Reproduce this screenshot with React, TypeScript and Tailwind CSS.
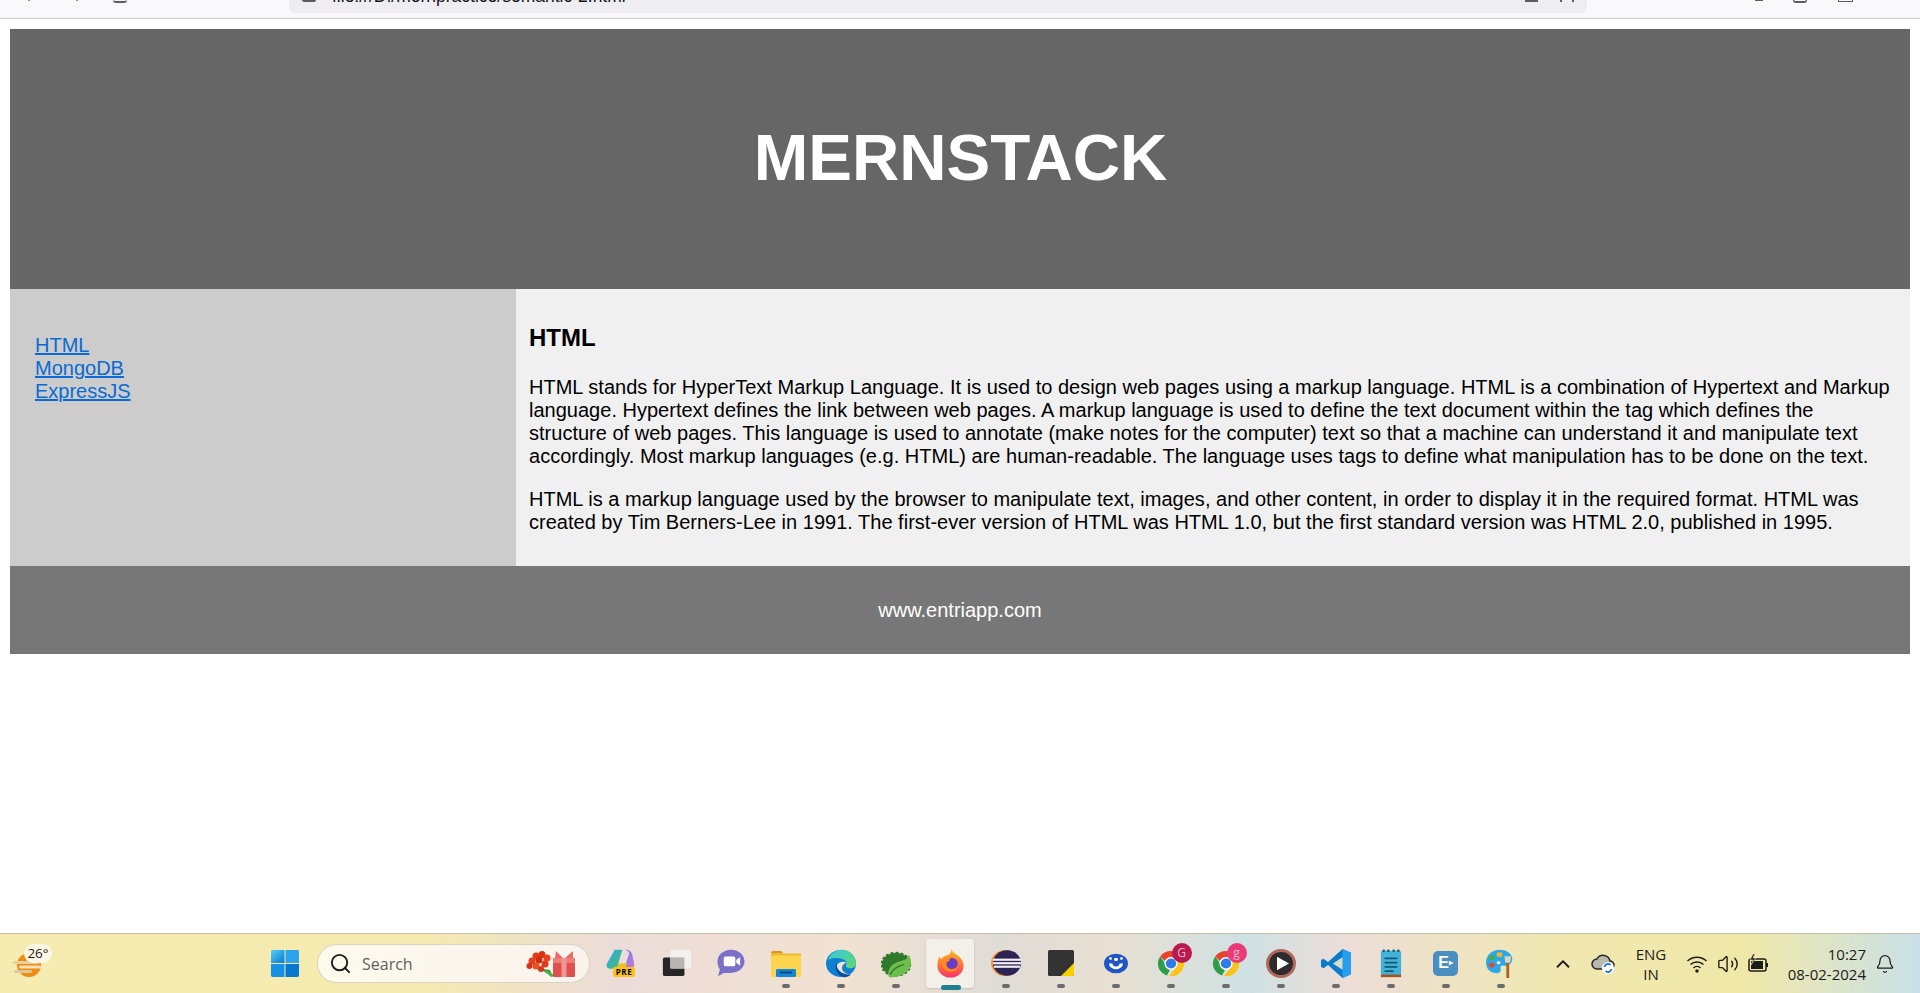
import { Search, ChevronUp, Bell, Volume2 } from "lucide-react"

function Dot({ active }: { active?: boolean }) {
  return active ? (
    <span className="absolute bottom-[4px] left-1/2 h-[5px] w-[20px] -translate-x-1/2 rounded-full bg-[#1e7f93]" />
  ) : (
    <span className="absolute bottom-[6px] left-1/2 h-[4px] w-[8px] -translate-x-1/2 rounded-full bg-[#6b6b6b]" />
  )
}

function Slot({ children, dot, active }: { children: React.ReactNode; dot?: boolean; active?: boolean }) {
  return (
    <div className="relative flex h-[60px] w-[55px] shrink-0 items-center justify-center">
      {active ? <div className="absolute left-[3px] top-[5px] h-[49px] w-[48px] rounded-[4px] bg-[#f3efe9] shadow-sm" /> : null}
      <div className="relative -mt-[1px] flex items-center justify-center">{children}</div>
      {dot ? <Dot active={active} /> : null}
    </div>
  )
}

function Badge({ letter, color }: { letter: string; color: string }) {
  return (
    <span
      className={`absolute -right-[6px] -top-[6px] flex h-[20px] w-[20px] items-center justify-center rounded-full text-[12px] text-[#f5b8c8] ${color}`}
    >
      {letter}
    </span>
  )
}

function Chrome() {
  return (
    <svg width="30" height="29" viewBox="0 0 30 30" preserveAspectRatio="none">
      <path d="M15 2 A13 13 0 0 1 26.3 8.500 L15 8.500 A6.500 6.500 0 0 0 9 12.500 L4.200 7.700 A13 13 0 0 1 15 2Z" fill="#e8432e" />
      <path d="M4.200 7.700 L10 16 A6.500 6.500 0 0 0 14 21.400 L11 27.500 A13 13 0 0 1 4.200 7.700Z" fill="#2f9e4a" />
      <path d="M26.300 8.500 A13 13 0 0 1 13 28 L19.500 19.500 A6.500 6.500 0 0 0 20.500 12 L26.300 8.500Z" fill="#fcc419" />
      <circle cx="15" cy="15" r="6.600" fill="#fff" />
      <circle cx="15" cy="15" r="5.200" fill="#2f7bea" />
    </svg>
  )
}

function Taskbar() {
  return (
    <div className="mt-auto flex h-[60px] shrink-0 items-center border-t border-[#c4c0a8] bg-[linear-gradient(90deg,#f6ecb2_0%,#f5ebb0_22%,#ecdcd9_32%,#f1e2d2_44%,#dfdcd6_52%,#e8e0d2_58%,#cfe1e3_65%,#ecddd8_70%,#f0e8b0_81%,#f0e8a8_91%,#c9e0e8_100%)] text-[#1c1c1c] font-['Open_Sans',sans-serif]">
      {/* weather */}
      <div className="relative ml-[13px] h-[40px] w-[39px] shrink-0">
        <svg width="28" height="24" viewBox="0 0 28 24" className="absolute bottom-[7px] left-0">
          <circle cx="16" cy="12" r="12" fill="#f08c12" />
          <rect x="0" y="8" width="26" height="3" rx="1.500" fill="#e8cfa0" />
          <rect x="6" y="12.500" width="22" height="3" rx="1.500" fill="#f4e2c0" />
          <rect x="1" y="17" width="18" height="3" rx="1.500" fill="#dcc89c" />
        </svg>
        <span className="absolute left-[11px] top-[0px] flex h-[19px] w-[28px] items-center justify-center rounded-full bg-[#fbf7e4] text-[13.500px]">
          26°
        </span>
      </div>

      {/* start */}
      <div className="ml-[205px]">
        <Slot>
          <svg width="30" height="29" viewBox="0 0 30 30" preserveAspectRatio="none">
            <defs>
              <linearGradient id="winA" x1="0" y1="0" x2="1" y2="1">
                <stop offset="0" stopColor="#52d0f8" />
                <stop offset="1" stopColor="#0678d0" />
              </linearGradient>
            </defs>
            <path d="M1 2.500a1.500 1.500 0 0 1 1.500-1.500H14.500V14.500H1Z" fill="url(#winA)" />
            <path d="M15.500 1H27.500a1.500 1.500 0 0 1 1.500 1.500V14.500H15.500Z" fill="#2aa4ec" />
            <path d="M1 15.500H14.500V29H2.500A1.500 1.500 0 0 1 1 27.500Z" fill="#1591e4" />
            <path d="M15.500 15.500H29V27.500a1.500 1.500 0 0 1-1.500 1.500H15.500Z" fill="#0678d0" />
          </svg>
        </Slot>
      </div>

      {/* search */}
      <div className="ml-[5px] flex h-[39px] w-[273px] shrink-0 items-center rounded-full border border-[#d8d4c4] bg-[linear-gradient(90deg,#fdfaec,#faf3ee)] pl-[11px]">
        <Search size={23} strokeWidth={2} className="text-[#1c1c1c]" />
        <span className="ml-[10px] text-[16px] text-[#5e5e5e]">Search</span>
        <svg width="50" height="26" viewBox="0 0 50 26" className="ml-auto mr-[13px]">
          <path d="M12 17 L27 26 L24 19 Z" fill="#3f9a3a" />
          <path d="M16 18 L25 26 L29 24 Z" fill="#55b24a" />
          <circle cx="10" cy="5" r="3.500" fill="#e23a18" />
          <circle cx="16" cy="3.500" r="3.500" fill="#d93316" />
          <circle cx="21" cy="7" r="3.500" fill="#e8401c" />
          <circle cx="6" cy="10" r="3.500" fill="#e8401c" />
          <circle cx="13" cy="9" r="3.500" fill="#c92e14" />
          <circle cx="19" cy="13" r="3.500" fill="#e23a18" />
          <circle cx="3.500" cy="15" r="3" fill="#d93316" />
          <circle cx="10" cy="15" r="3.500" fill="#e8501f" />
          <circle cx="15" cy="18" r="3" fill="#cf3a1a" />
          <rect x="27" y="7" width="22" height="19" rx="1" fill="#e0504f" />
          <rect x="27" y="7" width="22" height="5" fill="#ee7d78" />
          <rect x="35.500" y="7" width="5" height="19" fill="#f09690" />
          <path d="M37 7 L30 0 L29 7Z M39 7 L47 0 L47 7Z" fill="#e86b68" />
        </svg>
      </div>

      {/* copilot */}
      <div className="ml-[3px]">
        <Slot>
          <div className="relative h-[28px] w-[29px]">
            <svg width="29" height="24" viewBox="0 0 30 28" preserveAspectRatio="none">
              <defs>
                <linearGradient id="copA" x1="0" y1="0" x2="1" y2="1">
                  <stop offset="0" stopColor="#35a8e8" />
                  <stop offset="1" stopColor="#3fbf6a" />
                </linearGradient>
                <linearGradient id="copB" x1="0" y1="0" x2="1" y2="1">
                  <stop offset="0" stopColor="#4a8ff0" />
                  <stop offset="1" stopColor="#d870d8" />
                </linearGradient>
              </defs>
              <path d="M9 1h8l-6 22H4C1 23 0 20 1 17Z" fill="url(#copA)" />
              <path d="M14 1h7c3 0 5 2 6 5l2 10c1 4-1 7-4 7h-6l5-18c-.500-2-2-3-4-4Z" fill="url(#copB)" />
              <path d="M11 23l2-6h9l-2 6Z" fill="#e8c020" />
            </svg>
            <span className="absolute bottom-0 right-0 flex h-[10px] w-[22px] items-center justify-center rounded-[2px] bg-[#fcc419] text-[8px] font-bold leading-none tracking-[0.5px] text-black">
              PRE
            </span>
          </div>
        </Slot>
      </div>

      {/* task view */}
      <Slot>
        <svg width="30" height="28" viewBox="0 0 32 30" preserveAspectRatio="none">
          <rect x="2" y="9" width="23" height="20" rx="2" fill="#262626" />
          <rect x="10" y="1" width="22" height="20" rx="2" fill="#f4f2ee" />
          <rect x="10" y="9" width="15" height="12" fill="#b8b6b2" />
        </svg>
      </Slot>

      {/* teams */}
      <Slot>
        <svg width="28" height="28" viewBox="0 0 29 34" preserveAspectRatio="none">
          <path d="M14.500 1C23 1 28.500 8 28.500 15S23 29 14.500 29H7L1 33 3 25C1 22 .500 18 .500 15 .500 8 6 1 14.500 1Z" fill="#7b6fc8" />
          <rect x="7" y="9" width="12" height="12" rx="2" fill="#fff" />
          <path d="M20 13 L24 10 V20 L20 17Z" fill="#fff" />
        </svg>
      </Slot>

      {/* explorer */}
      <Slot dot>
        <svg width="30" height="27" viewBox="0 0 30 30" preserveAspectRatio="none">
          <path d="M0 3a2 2 0 0 1 2-2h8l3 3h-13Z" fill="#d69a12" />
          <path d="M0 4h30v24H0Z" fill="#f0b81e" />
          <path d="M0 6h30v24H0Z" fill="#fdd44e" />
          <rect x="5" y="21" width="20" height="9" rx="1.500" fill="#0f87d8" />
          <rect x="9" y="24" width="12" height="2" fill="#083c70" />
        </svg>
      </Slot>

      {/* edge */}
      <Slot dot>
        <svg width="30" height="29" viewBox="0 0 30 32" preserveAspectRatio="none">
          <defs>
            <linearGradient id="edgeA" x1="0" y1="0" x2="1" y2="1">
              <stop offset="0" stopColor="#38c8e0" />
              <stop offset="1" stopColor="#5fd86a" />
            </linearGradient>
          </defs>
          <circle cx="15" cy="16" r="15" fill="#0f7fd0" />
          <path d="M2 12C5 2 14 0 19 1 26 3 30 9 30 16 30 20 26 22 22 21 19 20 20 17 21 15 19 10 9 8 2 12Z" fill="url(#edgeA)" />
          <path d="M21 15C14 12 9 17 11 23 13 28 19 31 24 28 20 28 16 25 16 21 16 18 18 16 21 15Z" fill="#f2e4d2" />
          <path d="M15 30C10 27 8 20 11 15 9 23 17 29 25 28 22 31 18 32 15 30Z" fill="#0a4f9e" />
        </svg>
      </Slot>

      {/* spring tool */}
      <Slot dot>
        <svg width="30" height="29" viewBox="0 0 30 36" preserveAspectRatio="none">
          <circle cx="15" cy="19" r="14" fill="#2f7a2a" strokeDasharray="3 2" stroke="#2f7a2a" strokeWidth="3" />
          <path d="M8 35C14 36 28 33 30 18 30 12 28 7 28 7 26 16 18 13 12 19 8 23 6 30 8 35Z" fill="#6fbd4c" />
          <path d="M9 32C12 24 17 21 23 19" stroke="#2f7a2a" strokeWidth="1.500" fill="none" />
        </svg>
      </Slot>

      {/* firefox */}
      <Slot dot active>
        <svg width="27" height="29" viewBox="0 0 30 36" preserveAspectRatio="none">
          <defs>
            <linearGradient id="ffA" x1="0.500" y1="0" x2="0.500" y2="1">
              <stop offset="0" stopColor="#ffc31e" />
              <stop offset="0.500" stopColor="#ff7a2e" />
              <stop offset="1" stopColor="#f5346a" />
            </linearGradient>
          </defs>
          <path d="M16 0C17 5 22 6 25 10 28 13 29.500 17 29.500 21A14.500 14.500 0 0 1 .500 21C.500 15 2 11 3 9 3 11 4 12 5 13 6 9 10 8 13 7 15 5 16 3 16 0Z" fill="url(#ffA)" />
          <circle cx="16" cy="18" r="7" fill="#6a3bc8" />
          <path d="M6 17C8 10 14 9 19 11 15 11 13 13 14 15 10 15 9 20 13 24 17 27 23 24 23 20 24 24 20 29 14 28 8 27 5 22 6 17Z" fill="#ff8a1e" />
        </svg>
      </Slot>

      {/* eclipse */}
      <Slot dot>
        <svg width="30" height="28" viewBox="0 0 31 32" preserveAspectRatio="none">
          <circle cx="15" cy="16" r="15" fill="#f0962e" />
          <circle cx="16.500" cy="16" r="14.500" fill="#2c2255" />
          <rect x="2" y="11" width="29" height="2.500" fill="#f2eff7" />
          <rect x="2" y="15" width="29" height="2.500" fill="#f2eff7" />
          <rect x="3" y="19" width="27" height="2.500" fill="#f2eff7" />
        </svg>
      </Slot>

      {/* sticky notes */}
      <Slot dot>
        <svg width="26" height="26" viewBox="0 0 26 26">
          <rect x="0" y="0" width="26" height="26" rx="1.500" fill="#333333" />
          <path d="M13 26 L26 13 V24.500a1.500 1.500 0 0 1-1.500 1.500Z" fill="#f8d000" />
        </svg>
      </Slot>

      {/* blue app */}
      <Slot dot>
        <svg width="24" height="23" viewBox="0 0 24 28" preserveAspectRatio="none">
          <circle cx="12" cy="14" r="12" fill="#1f56c4" />
          <path d="M5 14a7 7 0 0 0 14 0h-3.500a3.500 3.500 0 0 1-7 0Z" fill="#fff" />
          <circle cx="12" cy="9" r="2" fill="#fff" />
          <circle cx="6.500" cy="8" r="1.500" fill="#fff" />
          <circle cx="17.500" cy="8" r="1.500" fill="#fff" />
        </svg>
      </Slot>

      <Slot dot>
        <div className="relative">
          <Chrome />
          <Badge letter="G" color="bg-[#b81a50]" />
        </div>
      </Slot>
      <Slot dot>
        <div className="relative">
          <Chrome />
          <Badge letter="g" color="bg-[#e83c78]" />
        </div>
      </Slot>

      {/* media player */}
      <Slot dot>
        <svg width="30" height="29" viewBox="0 0 30 30" preserveAspectRatio="none">
          <circle cx="15" cy="15" r="13.500" fill="#2e2a2e" stroke="#b0685a" strokeWidth="3" />
          <path d="M11 8 L23 15 L11 22Z" fill="#fff" />
        </svg>
      </Slot>

      {/* vs code */}
      <Slot dot>
        <svg width="30" height="29" viewBox="0 0 30 30" preserveAspectRatio="none">
          <path d="M21.500 0 L30 4 V26 L21.500 30 L7 16.500 2.500 20 0 18.500V11.500L2.500 10 7 13.500Z" fill="#0b7ccc" />
          <path d="M21.500 0 L30 4 V26 L21.500 30Z" fill="#26a0ee" />
          <path d="M21.500 8.500 L12 15 21.500 21.500Z" fill="#f0e8cc" opacity="0.900" />
        </svg>
      </Slot>

      {/* notepad */}
      <Slot dot>
        <svg width="22" height="29" viewBox="0 0 24 34" preserveAspectRatio="none">
          <rect x="1" y="2" width="22" height="30" rx="2" fill="#3fb4d8" />
          <rect x="1" y="30" width="22" height="3" fill="#a8501e" />
          <circle cx="4" cy="2" r="1.500" fill="#1b5a78" />
          <circle cx="9" cy="2" r="1.500" fill="#1b5a78" />
          <circle cx="15" cy="2" r="1.500" fill="#1b5a78" />
          <circle cx="20" cy="2" r="1.500" fill="#1b5a78" />
          <rect x="5" y="10" width="14" height="2" fill="#10566f" />
          <rect x="5" y="15" width="14" height="2" fill="#10566f" />
          <rect x="5" y="20" width="14" height="2" fill="#10566f" />
          <rect x="5" y="25" width="10" height="2" fill="#10566f" />
        </svg>
      </Slot>

      {/* E app */}
      <Slot dot>
        <div className="flex h-[25px] w-[25px] items-center justify-center rounded-[5px] bg-[#4a8fc0] font-['Liberation_Sans',sans-serif] text-[16px] font-bold text-white">
          E<span className="text-[8px]">▸</span>
        </div>
      </Slot>

      {/* paint */}
      <Slot dot>
        <svg width="29" height="29" viewBox="0 0 30 36" preserveAspectRatio="none">
          <path d="M14 1C6 1 0 8 0 17 0 25 5 30 11 30 15 30 16 27 15 24 14 21 17 20 20 21 25 21 28 16 27 11 26 5 21 1 14 1Z" fill="#2ca8e8" />
          <circle cx="6" cy="20" r="3" fill="#e04a30" />
          <circle cx="6" cy="11" r="3" fill="#3fb14a" />
          <circle cx="14" cy="7" r="3" fill="#f4b81e" />
          <circle cx="13" cy="17" r="2" fill="#f2f0e8" />
          <rect x="21" y="16" width="3" height="20" fill="#a8651e" />
          <path d="M19 9h7l-1 8h-5Z" fill="#ded4be" />
        </svg>
      </Slot>

      {/* tray */}
      <ChevronUp size={22} strokeWidth={2} className="ml-[24px] shrink-0" />
      <svg width="24" height="22" viewBox="0 0 24 22" className="ml-[17px] shrink-0">
        <path d="M6 16a5 5 0 0 1 0-10 7 7 0 0 1 13 2 4 4 0 0 1 0 8Z" fill="#b8b8b0" stroke="#262626" strokeWidth="1.500" />
        <circle cx="17" cy="15" r="6" fill="#fff" />
        <path d="M13.500 14a3.500 3.500 0 0 1 6-2M20.500 16a3.500 3.500 0 0 1-6 2" stroke="#1677d4" strokeWidth="1.800" fill="none" />
      </svg>
      <div className="ml-[21px] flex w-[30px] shrink-0 flex-col items-center text-[15px] leading-[20px]">
        <span>ENG</span>
        <span>IN</span>
      </div>
      <svg width="22" height="20" viewBox="0 0 22 20" className="ml-[20px] shrink-0" fill="none" stroke="#1c1c1c" strokeWidth="1.500">
        <path d="M1.500 7a14 14 0 0 1 19 0" />
        <path d="M4.500 10.500a9.500 9.500 0 0 1 13 0" />
        <path d="M7.500 14a5 5 0 0 1 7 0" />
        <circle cx="11" cy="17" r="1" fill="#1c1c1c" />
      </svg>
      <Volume2 size={22} strokeWidth={1.500} className="ml-[9px] shrink-0" />
      <svg width="22" height="20" viewBox="0 0 22 20" className="ml-[8px] shrink-0">
        <rect x="2" y="5" width="17" height="12" rx="2" fill="#f0e8a8" stroke="#1c1c1c" strokeWidth="1.500" />
        <rect x="19" y="9" width="2" height="4" fill="#1c1c1c" />
        <rect x="4" y="7" width="12" height="8" fill="#1c1c1c" />
        <path d="M6 0 L3 6 H6 L4 11 L9 4 H6 L8 0Z" fill="#1c1c1c" stroke="#f0e8a8" strokeWidth="0.600" />
      </svg>
      <div className="ml-auto flex shrink-0 flex-col items-end text-[15px] leading-[20px]">
        <span>10:27</span>
        <span>08-02-2024</span>
      </div>
      <Bell size={20} strokeWidth={1.500} className="ml-[9px] mr-[25px] shrink-0" />
    </div>
  )
}

export default function App() {
  return (
    <div className="flex h-screen flex-col overflow-hidden bg-white font-['Liberation_Sans',Arial,sans-serif] text-black">
      {/* browser toolbar, cut off by the screenshot */}
      <div className="flex h-[19px] shrink-0 items-start overflow-hidden border-b border-[#cfcfd8] bg-[#f9f9fb]">
        <span className="ml-[28px] h-[1px] w-[2px] bg-[#8f8f9d]" />
        <span className="ml-[46px] h-[1px] w-[2px] bg-[#8f8f9d]" />
        <span className="ml-[35px] h-[3px] w-[14px] rounded-b-full border-b-2 border-[#5b5b66]" />
        <div className="ml-[162px] flex h-[13px] w-[1298px] shrink-0 items-start overflow-hidden rounded-b-[6px] bg-[#eeeef2] text-[#15141a]">
          <span className="ml-[13px] h-[2px] w-[14px] shrink-0 rounded-b-[2px] bg-[#5b5b66]" />
          <span className="-mt-[14px] ml-[16px] whitespace-nowrap text-[17.500px] leading-[20px]">file:///D:/mernpractice/semantic-2.html</span>
          <span className="ml-auto h-[2px] w-[13px] shrink-0 bg-[#5b5b66]" />
          <span className="ml-[22px] mr-[13px] h-[2px] w-[14px] shrink-0 border-x-2 border-[#5b5b66]" />
        </div>
        <span className="ml-[168px] h-[1px] w-[8px] bg-[#5b5b66]" />
        <span className="ml-[30px] h-[3px] w-[14px] rounded-b-full border-x border-b-2 border-[#5b5b66]" />
        <span className="ml-[31px] h-[2px] w-[15px] border-x border-b border-[#5b5b66]" />
      </div>

      <div className="mx-[10px] mt-[10px] flex flex-col">
        <header className="flex h-[260px] items-center justify-center bg-[#666666] pb-[3px]">
          <h1 className="ml-[1px] text-[65.500px] font-bold leading-none text-white">MERNSTACK</h1>
        </header>

        <div className="flex">
          <nav className="flex w-[506px] shrink-0 flex-col items-start bg-[#cccccc] pl-[25px] pt-[45px] text-[20px] leading-[23px]">
            <a href="#" className="text-[#0a6bd4] underline">HTML</a>
            <a href="#" className="text-[#0a6bd4] underline">MongoDB</a>
            <a href="#" className="text-[#0a6bd4] underline">ExpressJS</a>
          </nav>
          <main className="flex-1 bg-[#f0f0f0] pb-[32px] pl-[13px] pr-[18px] pt-[35px] text-[20px] leading-[23px] tracking-[0.01px]">
            <h2 className="text-[24px] font-bold leading-[28px]">HTML</h2>
            <p className="mt-[24px]">
              HTML stands for HyperText Markup Language. It is used to design web pages using a markup language. HTML is a combination of Hypertext and Markup language. Hypertext defines the link between web pages. A markup language is used to define the text document within the tag which defines the structure of web pages. This language is used to annotate (make notes for the computer) text so that a machine can understand it and manipulate text accordingly. Most markup languages (e.g. HTML) are human-readable. The language uses tags to define what manipulation has to be done on the text.
            </p>
            <p className="mt-[20px]">
              HTML is a markup language used by the browser to manipulate text, images, and other content, in order to display it in the required format. HTML was created by Tim Berners-Lee in 1991. The first-ever version of HTML was HTML 1.0, but the first standard version was HTML 2.0, published in 1995.
            </p>
          </main>
        </div>

        <footer className="flex h-[88px] items-center justify-center bg-[#777777] text-[20px] text-white">
          www.entriapp.com
        </footer>
      </div>

      <Taskbar />
    </div>
  )
}
